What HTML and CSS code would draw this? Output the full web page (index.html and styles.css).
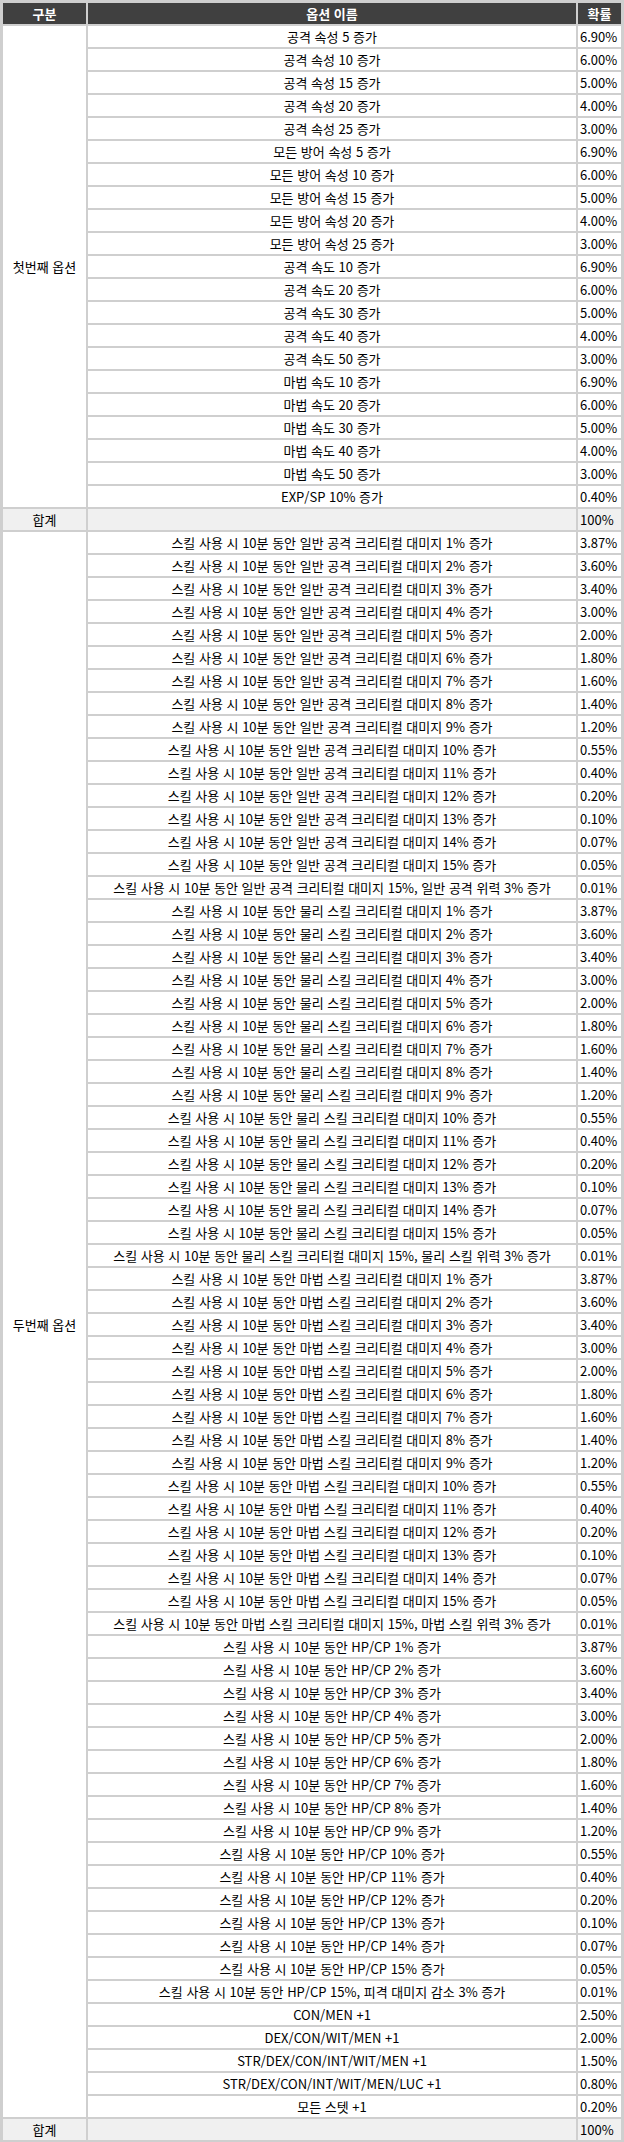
FILE: index.html
```html
<!DOCTYPE html>
<html lang="ko">
<head>
<meta charset="utf-8">
<title>옵션 확률</title>
<link rel="stylesheet" href="styles.css">
</head>
<body>
<table class="prob">
<colgroup><col class="c-cat"><col class="c-name"><col class="c-pct"></colgroup>
<thead>
<tr><th>구분</th><th>옵션 이름</th><th>확률</th></tr>
</thead>
<tbody>
<tr><td class="cat" rowspan="21">첫번째 옵션</td><td class="name">공격 속성 5 증가</td><td class="pct">6.90%</td></tr>
<tr><td class="name">공격 속성 10 증가</td><td class="pct">6.00%</td></tr>
<tr><td class="name">공격 속성 15 증가</td><td class="pct">5.00%</td></tr>
<tr><td class="name">공격 속성 20 증가</td><td class="pct">4.00%</td></tr>
<tr><td class="name">공격 속성 25 증가</td><td class="pct">3.00%</td></tr>
<tr><td class="name">모든 방어 속성 5 증가</td><td class="pct">6.90%</td></tr>
<tr><td class="name">모든 방어 속성 10 증가</td><td class="pct">6.00%</td></tr>
<tr><td class="name">모든 방어 속성 15 증가</td><td class="pct">5.00%</td></tr>
<tr><td class="name">모든 방어 속성 20 증가</td><td class="pct">4.00%</td></tr>
<tr><td class="name">모든 방어 속성 25 증가</td><td class="pct">3.00%</td></tr>
<tr><td class="name">공격 속도 10 증가</td><td class="pct">6.90%</td></tr>
<tr><td class="name">공격 속도 20 증가</td><td class="pct">6.00%</td></tr>
<tr><td class="name">공격 속도 30 증가</td><td class="pct">5.00%</td></tr>
<tr><td class="name">공격 속도 40 증가</td><td class="pct">4.00%</td></tr>
<tr><td class="name">공격 속도 50 증가</td><td class="pct">3.00%</td></tr>
<tr><td class="name">마법 속도 10 증가</td><td class="pct">6.90%</td></tr>
<tr><td class="name">마법 속도 20 증가</td><td class="pct">6.00%</td></tr>
<tr><td class="name">마법 속도 30 증가</td><td class="pct">5.00%</td></tr>
<tr><td class="name">마법 속도 40 증가</td><td class="pct">4.00%</td></tr>
<tr><td class="name">마법 속도 50 증가</td><td class="pct">3.00%</td></tr>
<tr><td class="name">EXP/SP 10% 증가</td><td class="pct">0.40%</td></tr>
<tr class="total"><td class="cat">합계</td><td class="name"></td><td class="pct">100%</td></tr>
<tr><td class="cat" rowspan="69">두번째 옵션</td><td class="name">스킬 사용 시 10분 동안 일반 공격 크리티컬 대미지 1% 증가</td><td class="pct">3.87%</td></tr>
<tr><td class="name">스킬 사용 시 10분 동안 일반 공격 크리티컬 대미지 2% 증가</td><td class="pct">3.60%</td></tr>
<tr><td class="name">스킬 사용 시 10분 동안 일반 공격 크리티컬 대미지 3% 증가</td><td class="pct">3.40%</td></tr>
<tr><td class="name">스킬 사용 시 10분 동안 일반 공격 크리티컬 대미지 4% 증가</td><td class="pct">3.00%</td></tr>
<tr><td class="name">스킬 사용 시 10분 동안 일반 공격 크리티컬 대미지 5% 증가</td><td class="pct">2.00%</td></tr>
<tr><td class="name">스킬 사용 시 10분 동안 일반 공격 크리티컬 대미지 6% 증가</td><td class="pct">1.80%</td></tr>
<tr><td class="name">스킬 사용 시 10분 동안 일반 공격 크리티컬 대미지 7% 증가</td><td class="pct">1.60%</td></tr>
<tr><td class="name">스킬 사용 시 10분 동안 일반 공격 크리티컬 대미지 8% 증가</td><td class="pct">1.40%</td></tr>
<tr><td class="name">스킬 사용 시 10분 동안 일반 공격 크리티컬 대미지 9% 증가</td><td class="pct">1.20%</td></tr>
<tr><td class="name">스킬 사용 시 10분 동안 일반 공격 크리티컬 대미지 10% 증가</td><td class="pct">0.55%</td></tr>
<tr><td class="name">스킬 사용 시 10분 동안 일반 공격 크리티컬 대미지 11% 증가</td><td class="pct">0.40%</td></tr>
<tr><td class="name">스킬 사용 시 10분 동안 일반 공격 크리티컬 대미지 12% 증가</td><td class="pct">0.20%</td></tr>
<tr><td class="name">스킬 사용 시 10분 동안 일반 공격 크리티컬 대미지 13% 증가</td><td class="pct">0.10%</td></tr>
<tr><td class="name">스킬 사용 시 10분 동안 일반 공격 크리티컬 대미지 14% 증가</td><td class="pct">0.07%</td></tr>
<tr><td class="name">스킬 사용 시 10분 동안 일반 공격 크리티컬 대미지 15% 증가</td><td class="pct">0.05%</td></tr>
<tr><td class="name">스킬 사용 시 10분 동안 일반 공격 크리티컬 대미지 15%, 일반 공격 위력 3% 증가</td><td class="pct">0.01%</td></tr>
<tr><td class="name">스킬 사용 시 10분 동안 물리 스킬 크리티컬 대미지 1% 증가</td><td class="pct">3.87%</td></tr>
<tr><td class="name">스킬 사용 시 10분 동안 물리 스킬 크리티컬 대미지 2% 증가</td><td class="pct">3.60%</td></tr>
<tr><td class="name">스킬 사용 시 10분 동안 물리 스킬 크리티컬 대미지 3% 증가</td><td class="pct">3.40%</td></tr>
<tr><td class="name">스킬 사용 시 10분 동안 물리 스킬 크리티컬 대미지 4% 증가</td><td class="pct">3.00%</td></tr>
<tr><td class="name">스킬 사용 시 10분 동안 물리 스킬 크리티컬 대미지 5% 증가</td><td class="pct">2.00%</td></tr>
<tr><td class="name">스킬 사용 시 10분 동안 물리 스킬 크리티컬 대미지 6% 증가</td><td class="pct">1.80%</td></tr>
<tr><td class="name">스킬 사용 시 10분 동안 물리 스킬 크리티컬 대미지 7% 증가</td><td class="pct">1.60%</td></tr>
<tr><td class="name">스킬 사용 시 10분 동안 물리 스킬 크리티컬 대미지 8% 증가</td><td class="pct">1.40%</td></tr>
<tr><td class="name">스킬 사용 시 10분 동안 물리 스킬 크리티컬 대미지 9% 증가</td><td class="pct">1.20%</td></tr>
<tr><td class="name">스킬 사용 시 10분 동안 물리 스킬 크리티컬 대미지 10% 증가</td><td class="pct">0.55%</td></tr>
<tr><td class="name">스킬 사용 시 10분 동안 물리 스킬 크리티컬 대미지 11% 증가</td><td class="pct">0.40%</td></tr>
<tr><td class="name">스킬 사용 시 10분 동안 물리 스킬 크리티컬 대미지 12% 증가</td><td class="pct">0.20%</td></tr>
<tr><td class="name">스킬 사용 시 10분 동안 물리 스킬 크리티컬 대미지 13% 증가</td><td class="pct">0.10%</td></tr>
<tr><td class="name">스킬 사용 시 10분 동안 물리 스킬 크리티컬 대미지 14% 증가</td><td class="pct">0.07%</td></tr>
<tr><td class="name">스킬 사용 시 10분 동안 물리 스킬 크리티컬 대미지 15% 증가</td><td class="pct">0.05%</td></tr>
<tr><td class="name">스킬 사용 시 10분 동안 물리 스킬 크리티컬 대미지 15%, 물리 스킬 위력 3% 증가</td><td class="pct">0.01%</td></tr>
<tr><td class="name">스킬 사용 시 10분 동안 마법 스킬 크리티컬 대미지 1% 증가</td><td class="pct">3.87%</td></tr>
<tr><td class="name">스킬 사용 시 10분 동안 마법 스킬 크리티컬 대미지 2% 증가</td><td class="pct">3.60%</td></tr>
<tr><td class="name">스킬 사용 시 10분 동안 마법 스킬 크리티컬 대미지 3% 증가</td><td class="pct">3.40%</td></tr>
<tr><td class="name">스킬 사용 시 10분 동안 마법 스킬 크리티컬 대미지 4% 증가</td><td class="pct">3.00%</td></tr>
<tr><td class="name">스킬 사용 시 10분 동안 마법 스킬 크리티컬 대미지 5% 증가</td><td class="pct">2.00%</td></tr>
<tr><td class="name">스킬 사용 시 10분 동안 마법 스킬 크리티컬 대미지 6% 증가</td><td class="pct">1.80%</td></tr>
<tr><td class="name">스킬 사용 시 10분 동안 마법 스킬 크리티컬 대미지 7% 증가</td><td class="pct">1.60%</td></tr>
<tr><td class="name">스킬 사용 시 10분 동안 마법 스킬 크리티컬 대미지 8% 증가</td><td class="pct">1.40%</td></tr>
<tr><td class="name">스킬 사용 시 10분 동안 마법 스킬 크리티컬 대미지 9% 증가</td><td class="pct">1.20%</td></tr>
<tr><td class="name">스킬 사용 시 10분 동안 마법 스킬 크리티컬 대미지 10% 증가</td><td class="pct">0.55%</td></tr>
<tr><td class="name">스킬 사용 시 10분 동안 마법 스킬 크리티컬 대미지 11% 증가</td><td class="pct">0.40%</td></tr>
<tr><td class="name">스킬 사용 시 10분 동안 마법 스킬 크리티컬 대미지 12% 증가</td><td class="pct">0.20%</td></tr>
<tr><td class="name">스킬 사용 시 10분 동안 마법 스킬 크리티컬 대미지 13% 증가</td><td class="pct">0.10%</td></tr>
<tr><td class="name">스킬 사용 시 10분 동안 마법 스킬 크리티컬 대미지 14% 증가</td><td class="pct">0.07%</td></tr>
<tr><td class="name">스킬 사용 시 10분 동안 마법 스킬 크리티컬 대미지 15% 증가</td><td class="pct">0.05%</td></tr>
<tr><td class="name">스킬 사용 시 10분 동안 마법 스킬 크리티컬 대미지 15%, 마법 스킬 위력 3% 증가</td><td class="pct">0.01%</td></tr>
<tr><td class="name">스킬 사용 시 10분 동안 HP/CP 1% 증가</td><td class="pct">3.87%</td></tr>
<tr><td class="name">스킬 사용 시 10분 동안 HP/CP 2% 증가</td><td class="pct">3.60%</td></tr>
<tr><td class="name">스킬 사용 시 10분 동안 HP/CP 3% 증가</td><td class="pct">3.40%</td></tr>
<tr><td class="name">스킬 사용 시 10분 동안 HP/CP 4% 증가</td><td class="pct">3.00%</td></tr>
<tr><td class="name">스킬 사용 시 10분 동안 HP/CP 5% 증가</td><td class="pct">2.00%</td></tr>
<tr><td class="name">스킬 사용 시 10분 동안 HP/CP 6% 증가</td><td class="pct">1.80%</td></tr>
<tr><td class="name">스킬 사용 시 10분 동안 HP/CP 7% 증가</td><td class="pct">1.60%</td></tr>
<tr><td class="name">스킬 사용 시 10분 동안 HP/CP 8% 증가</td><td class="pct">1.40%</td></tr>
<tr><td class="name">스킬 사용 시 10분 동안 HP/CP 9% 증가</td><td class="pct">1.20%</td></tr>
<tr><td class="name">스킬 사용 시 10분 동안 HP/CP 10% 증가</td><td class="pct">0.55%</td></tr>
<tr><td class="name">스킬 사용 시 10분 동안 HP/CP 11% 증가</td><td class="pct">0.40%</td></tr>
<tr><td class="name">스킬 사용 시 10분 동안 HP/CP 12% 증가</td><td class="pct">0.20%</td></tr>
<tr><td class="name">스킬 사용 시 10분 동안 HP/CP 13% 증가</td><td class="pct">0.10%</td></tr>
<tr><td class="name">스킬 사용 시 10분 동안 HP/CP 14% 증가</td><td class="pct">0.07%</td></tr>
<tr><td class="name">스킬 사용 시 10분 동안 HP/CP 15% 증가</td><td class="pct">0.05%</td></tr>
<tr><td class="name">스킬 사용 시 10분 동안 HP/CP 15%, 피격 대미지 감소 3% 증가</td><td class="pct">0.01%</td></tr>
<tr><td class="name">CON/MEN +1</td><td class="pct">2.50%</td></tr>
<tr><td class="name">DEX/CON/WIT/MEN +1</td><td class="pct">2.00%</td></tr>
<tr><td class="name">STR/DEX/CON/INT/WIT/MEN +1</td><td class="pct">1.50%</td></tr>
<tr><td class="name">STR/DEX/CON/INT/WIT/MEN/LUC +1</td><td class="pct">0.80%</td></tr>
<tr><td class="name">모든 스텟 +1</td><td class="pct">0.20%</td></tr>
<tr class="total"><td class="cat">합계</td><td class="name"></td><td class="pct">100%</td></tr>
</tbody>
</table>
</body>
</html>
```

FILE: styles.css
```css
html, body {
  margin: 0;
  padding: 0;
  background: #ffffff;
}

body {
  font-family: "Noto Sans CJK KR", "Noto Sans", sans-serif;
  font-size: 13px;
  color: #000000;
}

.prob {
  width: 624px;
  table-layout: fixed;
  border-collapse: separate;
  border-spacing: 2px;
  border: 1px solid #cfcfcf;
  background: #cfcfcf;
}

.c-cat { width: 83px; }
.c-pct { width: 43px; }

.prob th,
.prob td {
  height: 21px;
  padding: 0;
  line-height: 21px;
  box-sizing: border-box;
  white-space: nowrap;
  overflow: hidden;
}

.prob th {
  background: #404040;
  color: #ffffff;
  font-weight: bold;
  font-size: 13px;
  text-align: center;
}

.prob td {
  background: #ffffff;
  text-align: center;
  vertical-align: middle;
}

.prob td.pct {
  text-align: left;
  padding-left: 2px;
}

.prob tr.total td {
  background: #f0f0f0;
}
```
